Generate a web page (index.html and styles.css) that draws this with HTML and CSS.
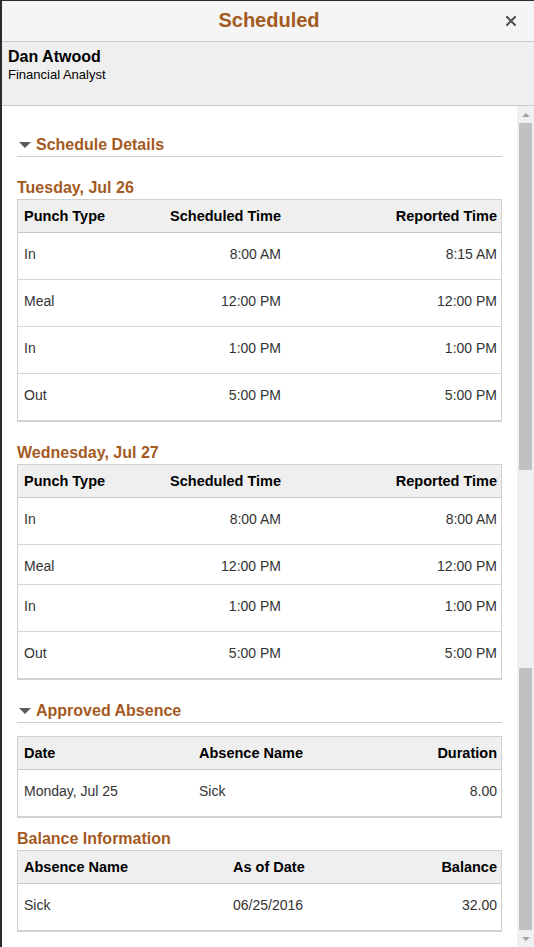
FILE: index.html
```html
<!DOCTYPE html>
<html lang="en">
<head>
<meta charset="utf-8">
<title>Scheduled</title>
<link rel="stylesheet" href="styles.css">
</head>
<body>
<div class="frame">
  <header class="modal-header">
    <h1 class="modal-title">Scheduled</h1>
    <button class="close" aria-label="Close">
      <svg width="10" height="10" viewBox="0 0 10 10"><path d="M1 1L9 9M9 1L1 9" stroke="#555" stroke-width="2.2" stroke-linecap="square"/></svg>
    </button>
  </header>
  <div class="person">
    <div class="person-name">Dan Atwood</div>
    <div class="person-job">Financial Analyst</div>
  </div>
  <div class="body-wrap">
    <main class="content">
      <h2 class="section-head"><span class="tri"></span>Schedule Details</h2>

      <h3 class="day-title">Tuesday, Jul 26</h3>
      <table class="grid punch">
        <colgroup><col class="c1"><col class="c2"><col></colgroup>
        <thead><tr><th>Punch Type</th><th class="r">Scheduled Time</th><th class="r">Reported Time</th></tr></thead>
        <tbody>
          <tr><td>In</td><td class="r">8:00 AM</td><td class="r">8:15 AM</td></tr>
          <tr><td>Meal</td><td class="r">12:00 PM</td><td class="r">12:00 PM</td></tr>
          <tr><td>In</td><td class="r">1:00 PM</td><td class="r">1:00 PM</td></tr>
          <tr><td>Out</td><td class="r">5:00 PM</td><td class="r">5:00 PM</td></tr>
        </tbody>
      </table>

      <h3 class="day-title">Wednesday, Jul 27</h3>
      <table class="grid punch">
        <colgroup><col class="c1"><col class="c2"><col></colgroup>
        <thead><tr><th>Punch Type</th><th class="r">Scheduled Time</th><th class="r">Reported Time</th></tr></thead>
        <tbody>
          <tr><td>In</td><td class="r">8:00 AM</td><td class="r">8:00 AM</td></tr>
          <tr class="short"><td>Meal</td><td class="r">12:00 PM</td><td class="r">12:00 PM</td></tr>
          <tr><td>In</td><td class="r">1:00 PM</td><td class="r">1:00 PM</td></tr>
          <tr><td>Out</td><td class="r">5:00 PM</td><td class="r">5:00 PM</td></tr>
        </tbody>
      </table>

      <h2 class="section-head second"><span class="tri"></span>Approved Absence</h2>
      <table class="grid absence">
        <colgroup><col class="c1"><col class="c2"><col></colgroup>
        <thead><tr><th>Date</th><th>Absence Name</th><th class="r">Duration</th></tr></thead>
        <tbody>
          <tr><td>Monday, Jul 25</td><td>Sick</td><td class="r">8.00</td></tr>
        </tbody>
      </table>

      <h3 class="day-title balance-title">Balance Information</h3>
      <table class="grid balance">
        <colgroup><col class="c1"><col class="c2"><col></colgroup>
        <thead><tr><th>Absence Name</th><th>As of Date</th><th class="r">Balance</th></tr></thead>
        <tbody>
          <tr><td>Sick</td><td>06/25/2016</td><td class="r">32.00</td></tr>
        </tbody>
      </table>
    </main>
    <div class="scrollbar" aria-hidden="true">
      <div class="sb-btn"><span class="arrow-up"></span></div>
      <div class="sb-thumb t1"></div>
      <div class="sb-gap"></div>
      <div class="sb-thumb t2"></div>
      <div class="sb-btn"><span class="arrow-down"></span></div>
    </div>
  </div>
</div>
</body>
</html>
```

FILE: styles.css
```css
* { box-sizing: border-box; }

html, body {
  margin: 0;
  padding: 0;
  background: #ffffff;
}

body {
  font-family: "Liberation Sans", Arial, sans-serif;
  color: #333333;
  overflow: hidden;
}

.frame {
  width: 534px;
  height: 947px;
  border-top: 1px solid #2b2b2b;
  border-left: 2px solid #2b2b2b;
  display: flex;
  flex-direction: column;
  overflow: hidden;
}

.modal-header {
  height: 41px;
  flex: none;
  background: #f5f5f5;
  border-bottom: 1px solid #c9c9c9;
  display: flex;
  align-items: center;
  justify-content: center;
  position: relative;
  padding-bottom: 2px;
}

.modal-title {
  margin: 0;
  font-size: 20px;
  line-height: 24px;
  font-weight: bold;
  color: #a45a1f;
  padding-left: 2px;
}

.close {
  position: absolute;
  right: 16px;
  top: 13px;
  width: 14px;
  height: 14px;
  padding: 2px;
  border: 0;
  background: transparent;
  display: flex;
  align-items: center;
  justify-content: center;
}

.person {
  height: 64px;
  flex: none;
  background: #efefef;
  border-bottom: 1px solid #c9c9c9;
  padding: 6px 6px 0;
}

.person-name {
  font-size: 16px;
  line-height: 18px;
  font-weight: bold;
  color: #000000;
}

.person-job {
  font-size: 13px;
  line-height: 18px;
  color: #000000;
}

.body-wrap {
  flex: 1;
  display: flex;
  min-height: 0;
}

.content {
  flex: 1;
  padding: 28px 15px 0;
  overflow: hidden;
}

.section-head {
  margin: 0;
  font-size: 16px;
  line-height: 20px;
  font-weight: bold;
  color: #a45a1f;
  padding-top: 1px;
  padding-bottom: 1px;
  border-bottom: 1px solid #cccccc;
  display: flex;
  align-items: center;
}

.section-head.second {
  margin-top: 20px;
}

.tri {
  width: 0;
  height: 0;
  border-left: 6px solid transparent;
  border-right: 6px solid transparent;
  border-top: 6px solid #5a5a5a;
  margin: 0 5px 0 2px;
}

.day-title {
  margin: 22px 0 2px;
  font-size: 16px;
  line-height: 18px;
  font-weight: bold;
  color: #a45a1f;
}

.balance-title {
  margin-top: 12px;
}

.grid {
  width: 100%;
  table-layout: fixed;
  border-collapse: separate;
  border-spacing: 0;
  border: 1px solid #cfcfcf;
  border-bottom: 2px solid #d3d3d3;
  font-size: 14px;
}

.absence { margin-top: 13px; }

.grid th {
  background: #efefef;
  color: #000000;
  font-weight: bold;
  font-size: 14.5px;
  text-align: left;
  height: 33px;
  padding: 0 4px 0 6px;
  line-height: 16px;
  border-bottom: 1px solid #c6c6c6;
  vertical-align: middle;
  white-space: nowrap;
}

.grid td {
  padding: 13px 4px 17px 6px;
  line-height: 16px;
  height: 47px;
  border-bottom: 1px solid #d6d6d6;
  color: #333333;
  vertical-align: top;
}

.grid tbody tr:last-child td {
  border-bottom: 0;
  height: 46px;
}

.grid tr.short td {
  height: 40px;
  padding-bottom: 10px;
}

.grid .r { text-align: right; }

.punch .c1 { width: 125px; }
.punch .c2 { width: 142px; }

.absence .c1 { width: 175px; }
.absence .c2 { width: 160px; }

.balance .c1 { width: 209px; }
.balance .c2 { width: 160px; }

.scrollbar {
  width: 17px;
  flex: none;
  background: #f0f0f0;
  display: flex;
  flex-direction: column;
  align-items: center;
}

.sb-btn {
  width: 17px;
  height: 17px;
  flex: none;
  display: flex;
  align-items: center;
  justify-content: center;
}

.arrow-up {
  width: 0;
  height: 0;
  border-left: 4px solid transparent;
  border-right: 4px solid transparent;
  border-bottom: 4px solid #a3a3a3;
}

.arrow-down {
  width: 0;
  height: 0;
  border-left: 4px solid transparent;
  border-right: 4px solid transparent;
  border-top: 4px solid #a3a3a3;
}

.sb-thumb {
  width: 13px;
  background: #c1c1c1;
  flex: none;
}

.t1 { height: 347px; }
.sb-gap { height: 198px; flex: none; }
.t2 { flex: 1; }
```
